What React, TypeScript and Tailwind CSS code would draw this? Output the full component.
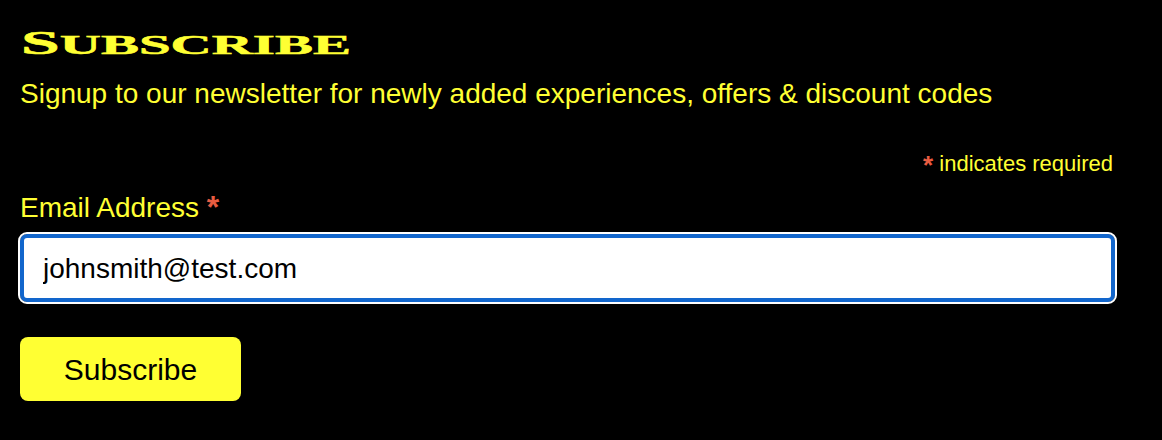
import React, { useState } from 'react';

const App: React.FC = () => {
  const [email, setEmail] = useState('johnsmith@test.com');

  return (
    <div className="h-[440px] w-[1162px] overflow-hidden bg-black pl-5 pr-[47px] pt-[25px] font-['Liberation_Sans',Arial,sans-serif] text-[#ffff33]">
      <h2 className="ml-px h-[36px] origin-left scale-x-[2.11] font-['Liberation_Serif',serif] text-[33px] leading-[36px] font-bold [-webkit-text-stroke:0.5px_#ffff33]">
        S<span className="text-[27px] uppercase">ubscribe</span>
      </h2>
      <p className="mt-[16px] text-[28px] leading-[34px]">
        Signup to our newsletter for newly added experiences, offers &amp; discount codes
      </p>

      <form className="mt-[40px]" onSubmit={(e) => e.preventDefault()}>
        <div className="h-[26px] pr-[2px] text-right text-[22px] leading-[26px]">
          <span className="align-[-3px] text-[26px] leading-none font-bold text-[#e85c41]">*</span> indicates required
        </div>
        <label htmlFor="email" className="mt-[14px] block h-[34px] text-[28px] leading-[34px]">
          Email Address <span className="align-[-1px] text-[32px] leading-none font-bold text-[#e85c41]">*</span>
        </label>
        <input
          id="email"
          value={email}
          onChange={(e) => setEmail(e.target.value)}
          className="mt-[9px] block h-[68px] w-full rounded-[7px] border-[4px] border-[#1266cc] bg-white pl-[19px] pt-[2px] text-[28px] text-black outline-2 outline-white"
        />
        <button
          type="submit"
          className="mt-[35px] block h-[64px] w-[221px] rounded-[8px] bg-[#ffff33] text-[30px] text-black"
        >
          Subscribe
        </button>
      </form>
    </div>
  );
};

export default App;
